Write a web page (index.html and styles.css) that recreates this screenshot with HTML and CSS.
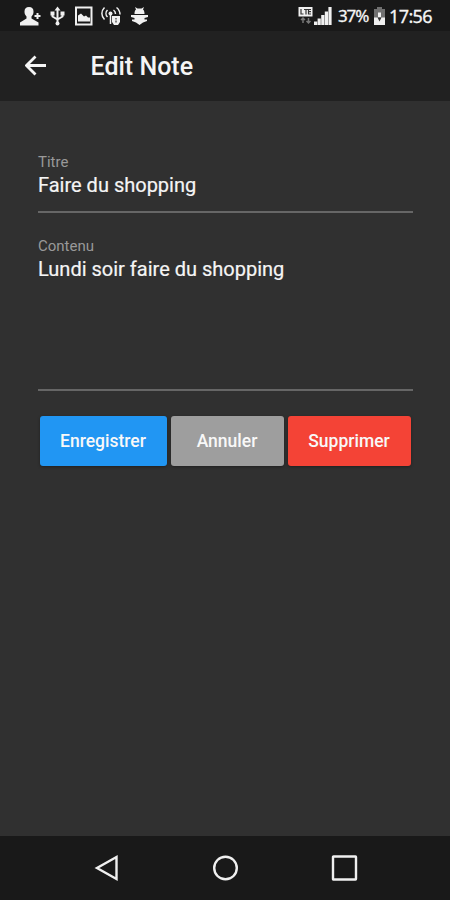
FILE: index.html
```html
<!DOCTYPE html>
<html lang="fr">

<head>
  <meta charset="UTF-8">
  <meta name="viewport" content="width=device-width, initial-scale=1.0">
  <title>Edit Note</title>
  <link rel="stylesheet" href="styles.css">
</head>

<body>
  <div class="note-container">
    <div class="status-bar">
      <div class="status-icons">
        <svg width="22" height="20" viewBox="0 0 22 20">
          <path d="M0 19.500v-3l6.500-4v-2C5 9 4.500 7.500 4.500 5.500c0-3 1.500-4.500 4.500-4.500s4.500 1.500 4.500 4.500c0 2-.5 3.500-2 5v2l7 4v3z" />
          <path d="M17.500 7v6M14.500 10h6" class="line" />
        </svg>
        <svg width="16" height="20" viewBox="0 0 16 20">
          <path d="M7.500 3v15M2.500 7v3.500l5 3M12.500 7v3.500l-5 3" class="line" />
          <path d="M7.500 .5l3 4h-6zM.5 5.500h4v4h-4zM10.500 5.500h4v4h-4z" />
          <circle cx="7.500" cy="17.500" r="2" />
        </svg>
        <svg width="19" height="20" viewBox="0 0 19 20">
          <path d="M2 1.500h15.500v17H2z" class="line" />
          <path d="M4 15.500V9.500l3-2 3 3 2-1 2 2h2v4z" />
        </svg>
        <svg width="21" height="20" viewBox="0 0 21 20">
          <path d="M3.500 1.500C0 5 0 10 3.500 13.500M6.500 4c-2 2-2 5 0 7M15.500 1.500c2.500 2 3.500 4.500 3.500 7M12.500 4c1.500 1 2 2.500 2 4M9.500 7.500V18" class="line thin" />
          <circle cx="9.500" cy="7.500" r="2" />
          <path d="M11 10h8v6l-2 3h-4l-2-3z" />
          <path d="M15 12v1.500M15 14.500v2" class="cut" />
        </svg>
        <svg width="19" height="20" viewBox="0 0 19 20">
          <path d="M4.500 8c0-2 .3-3.500 1.500-4.500L5 1l2.500 1.500h4L14 1l-1 2.500c1.200 1 1.500 2.500 1.500 4.500z" />
          <path d="M1 9h17v2l-3.500 1v1.500H17V15l-4 1.500-3.500 2.500L6 16.500 2 15v-1.500h2.500V12L1 11z" />
        </svg>
      </div>
      <div class="status-info">
        <svg width="16" height="20" viewBox="0 0 16 20">
          <path d="M.5 1h14v9.500H.5z" />
          <path d="M3 3v5h2.500M6 3.500h4M8 3.500v5M13 3.500h-2.500v4.500H13M10.500 5.700H13" class="cut" />
          <path d="M5 12v5M3 14l2-2 2 2M10.500 12v5M8.500 15l2 2 2-2" class="line dim" />
        </svg>
        <svg width="19" height="20" viewBox="0 0 19 20">
          <path d="M0 15.500h3.200v3.500H0zM3.600 12.500h3.200v6.500H3.600zM7.200 9h3.200v10H7.200zM10.800 5.500h3.200v13.500h-3.200zM14.400 1h3.200v18h-3.200z" />
        </svg>
        <span class="battery-level">37%</span>
        <svg width="13" height="20" viewBox="0 0 13 20">
          <path d="M4 1h5v2h3v16H1V3h3z" class="battery" />
          <path d="M1 11.500h11V19H1z" />
          <path d="M5 6.500h3V11H5z" />
          <path d="M4.500 11.500h4l-2 4z" class="bolt" />
        </svg>
        <span class="clock">17:56</span>
      </div>
    </div>

    <div class="header">
      <svg class="back" width="22" height="22" viewBox="0 0 22 22">
        <path d="M21 10.500H2M10.500 1.500l-9 9 9 9" />
      </svg>
      <h1 class="title">Edit Note</h1>
    </div>

    <div class="contents">
      <div class="field">
        <div class="label">Titre</div>
        <div class="value">Faire du shopping</div>
      </div>
      <div class="field field-content">
        <div class="label">Contenu</div>
        <div class="value">Lundi soir faire du shopping</div>
      </div>
      <div class="btns">
        <button class="btn btn-blue" type="button">Enregistrer</button>
        <button class="btn btn-gray" type="button">Annuler</button>
        <button class="btn btn-red" type="button">Supprimer</button>
      </div>
    </div>

    <div class="nav-bar">
      <svg width="26" height="28" viewBox="0 0 26 28">
        <path d="M22.500 3v22L3 14z" />
      </svg>
      <svg width="28" height="28" viewBox="0 0 28 28">
        <circle cx="14.500" cy="14" r="11.300" />
      </svg>
      <svg width="28" height="28" viewBox="0 0 28 28">
        <rect x="3" y="2.500" width="23" height="23" rx="0.500" />
      </svg>
    </div>
  </div>
</body>

</html>
```
FILE: styles.css
```css
body {
  margin: 0;
  background-color: #303030;
  font-family: Roboto, "Liberation Sans", sans-serif;
  color: #f5f5f5;
}

.note-container {
  display: flex;
  flex-direction: column;
  height: 900px;
}

.status-bar {
  display: flex;
  justify-content: space-between;
  box-sizing: border-box;
  height: 31px;
  padding: 6px 18px 0 20px;
  background-color: #191919;
}

.status-icons,
.status-info {
  display: flex;
  align-items: center;
  height: 20px;
}

.status-icons {
  gap: 8px;
}

.status-bar svg {
  flex-shrink: 0;
  fill: #f0f0f0;
}

.status-bar .line {
  fill: none;
  stroke: #f0f0f0;
  stroke-width: 2;
}

.status-bar .thin {
  stroke-width: 1.5;
}

.status-bar .dim {
  stroke: #777777;
  stroke-width: 1.5;
}

.status-bar .cut {
  fill: none;
  stroke: #333333;
  stroke-width: 1.2;
}

.status-bar .battery {
  fill: #707070;
}

.status-bar .bolt {
  fill: #333333;
}

.status-info {
  font-family: "Noto Sans", sans-serif;
  font-size: 18px;
  line-height: 20px;
}

.battery-level {
  width: 31px;
  margin: 0 4px 0 5px;
  font-size: 17px;
  letter-spacing: -1.1px;
  -webkit-text-stroke: 0.3px #f5f5f5;
}

.clock {
  margin-left: 3px;
  letter-spacing: -0.6px;
  -webkit-text-stroke: 0.3px #f5f5f5;
}

.header {
  display: flex;
  align-items: center;
  height: 70px;
  padding-left: 25px;
  background-color: #212121;
}

.back path {
  fill: none;
  stroke: #f5f5f5;
  stroke-width: 2.8;
}

.title {
  margin: 2px 0 0 43.5px;
  font-size: 25px;
  font-weight: 500;
  line-height: 30px;
}

.contents {
  flex: 1;
  padding: 52px 37px 0 38px;
}

.field {
  box-sizing: border-box;
  height: 60px;
  margin-bottom: 24px;
  border-bottom: 2px solid #666666;
}

.field-content {
  height: 154px;
  margin-bottom: 25px;
}

.label {
  font-size: 15px;
  line-height: 18px;
  color: #999999;
}

.value {
  margin-top: 1px;
  font-size: 20px;
  line-height: 26px;
  -webkit-text-stroke: 0.2px #f5f5f5;
}

.btns {
  display: grid;
  grid-template-columns: 127px 113px 123px;
  gap: 4px;
  padding-left: 2px;
}

.btn {
  height: 50px;
  padding: 0 1px 0 0;
  border: none;
  border-radius: 3px;
  font-family: inherit;
  font-size: 17.5px;
  font-weight: 500;
  color: #f8f8f8;
  box-shadow: 0 1px 3px rgba(0, 0, 0, 0.35);
}

.btn-blue {
  background-color: #2196f3;
}

.btn-gray {
  background-color: #9e9e9e;
}

.btn-red {
  background-color: #f44336;
}

.nav-bar {
  display: flex;
  align-items: center;
  justify-content: space-between;
  box-sizing: border-box;
  height: 64px;
  padding: 0 92px 0 94px;
  background-color: #191919;
}

.nav-bar svg {
  fill: none;
  stroke: #f0f0f0;
  stroke-width: 2.4;
}
```
